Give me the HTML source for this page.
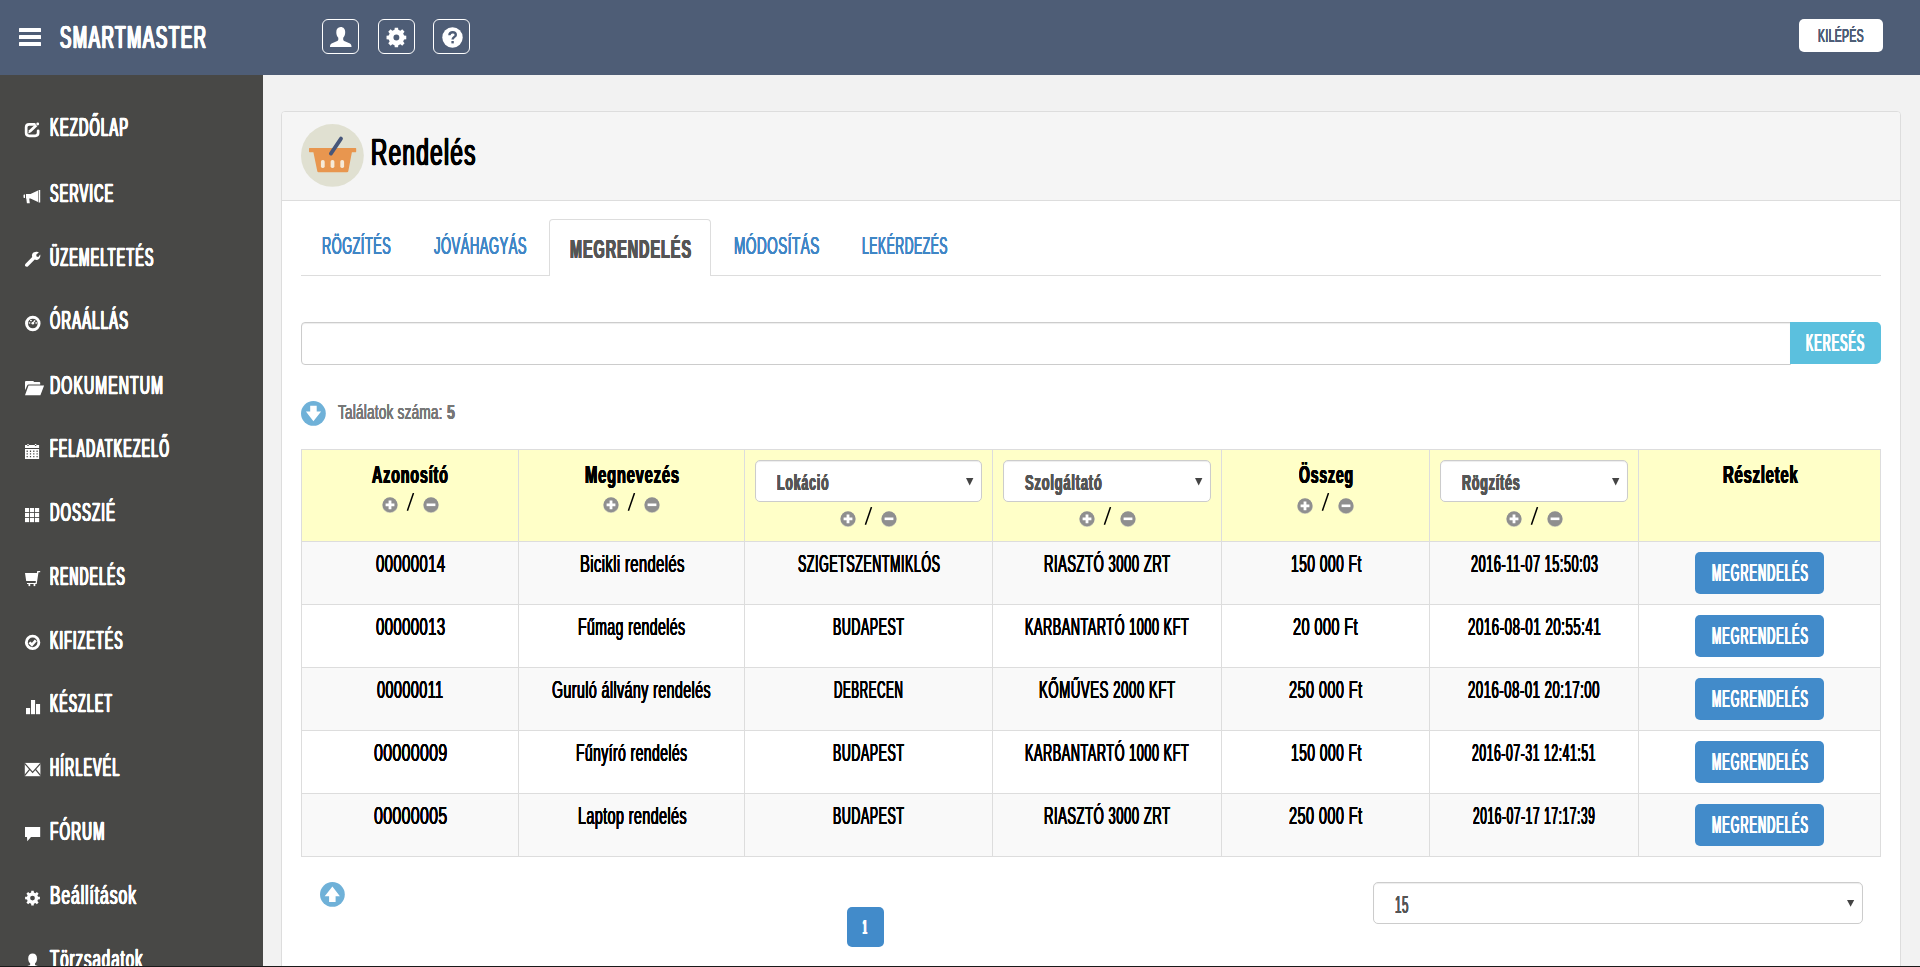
<!DOCTYPE html>
<html lang="hu"><head><meta charset="utf-8"><title>SmartMaster - Rendelés</title>
<style>
html,body{margin:0;padding:0}
body{width:1920px;height:967px;overflow:hidden;position:relative;background:#f2f2f2;font-family:"Liberation Sans",sans-serif}
.a{position:absolute;display:block}
.t{position:absolute;display:block;white-space:nowrap;line-height:1;transform-origin:0 0}
</style></head><body>
<div class="a" style="left:0px;top:0px;width:1920px;height:967px;background:#f2f2f2"></div>
<div class="a" style="left:0px;top:75px;width:263px;height:892px;background:#484846"></div>
<div class="a" style="left:0px;top:0px;width:1920px;height:75px;background:#4e5d76"></div>
<div class="a" style="left:18.5px;top:28px;width:22.5px;height:4px;background:#fff;border-radius:0.5px"></div>
<div class="a" style="left:18.5px;top:35px;width:22.5px;height:4px;background:#fff;border-radius:0.5px"></div>
<div class="a" style="left:18.5px;top:42px;width:22.5px;height:4px;background:#fff;border-radius:0.5px"></div>
<span class="t" style="left:60.20px;top:22px;font-size:31.50px;font-weight:normal;color:#fff;transform:scaleX(0.5370);text-shadow:1.55px 0 0 #fff,-1.55px 0 0 #fff,0.77px 0 0 #fff,-0.77px 0 0 #fff;letter-spacing:3.09px;-webkit-text-stroke:0.65px #fff;">SMARTMASTER</span>
<div class="a" style="left:322px;top:19px;width:37px;height:35px;box-sizing:border-box;border:1px solid #fff;border-radius:6px"></div>
<div class="a" style="left:378px;top:19px;width:37px;height:35px;box-sizing:border-box;border:1px solid #fff;border-radius:6px"></div>
<div class="a" style="left:433px;top:19px;width:37px;height:35px;box-sizing:border-box;border:1px solid #fff;border-radius:6px"></div>
<svg class="a" style="left:330px;top:26.5px" width="21.5" height="20.5" viewBox="0 0 21.5 20.5"><path fill="#fff" d="M10.7 0 C13.6 0 15.2 2.2 15.2 5.2 C15.2 7.6 14.4 9.6 13.2 10.8 L13.2 12.6 C13.2 13.4 13.8 13.9 14.8 14.3 L19.4 16.2 C20.8 16.8 21.5 18 21.5 19.4 L21.5 20.5 L0 20.5 L0 19.4 C0 18 0.7 16.8 2.1 16.2 L6.7 14.3 C7.7 13.9 8.3 13.4 8.3 12.6 L8.3 10.8 C7.1 9.6 6.3 7.6 6.3 5.2 C6.3 2.2 7.8 0 10.7 0 Z"/></svg>
<svg class="a" style="left:386px;top:26.5px" width="21" height="21" viewBox="0 0 21 21"><path fill="#fff" fill-rule="evenodd" d="M18.07 8.60 L20.26 8.86 L20.26 12.14 L18.07 12.40 L17.17 14.57 L18.54 16.31 L16.21 18.64 L14.47 17.27 L12.30 18.17 L12.04 20.36 L8.76 20.36 L8.50 18.17 L6.33 17.27 L4.59 18.64 L2.26 16.31 L3.63 14.57 L2.73 12.40 L0.54 12.14 L0.54 8.86 L2.73 8.60 L3.63 6.43 L2.26 4.69 L4.59 2.36 L6.33 3.73 L8.50 2.83 L8.76 0.64 L12.04 0.64 L12.30 2.83 L14.47 3.73 L16.21 2.36 L18.54 4.69 L17.17 6.43 Z M7.45 10.50 a2.95 2.95 0 1 0 5.90 0 a2.95 2.95 0 1 0 -5.90 0 Z"/></svg>
<svg class="a" style="left:441.5px;top:26.5px" width="21" height="21" viewBox="0 0 21 21"><circle cx="10.5" cy="10.5" r="10.2" fill="#fff"/><path fill="none" stroke="#4e5d76" stroke-width="2.4" d="M7.4 8.2 C7.4 6.2 8.8 5.3 10.6 5.3 C12.5 5.3 13.8 6.3 13.8 7.9 C13.8 9.9 10.6 10 10.6 12.6"/><rect x="9.4" y="14" width="2.4" height="2.4" fill="#4e5d76"/></svg>
<div class="a" style="left:1799px;top:19px;width:84px;height:33px;background:#fff;border-radius:5px"></div>
<span class="t" style="left:1817.97px;top:26px;font-size:19.00px;font-weight:normal;color:#4e5d76;transform:scaleX(0.5508);text-shadow:0.31px 0 0 #4e5d76,-0.31px 0 0 #4e5d76,0.15px 0 0 #4e5d76,-0.15px 0 0 #4e5d76;letter-spacing:0.61px;">KILÉPÉS</span>
<span class="t" style="left:50.31px;top:115px;font-size:25.25px;font-weight:normal;color:#fff;transform:scaleX(0.5158);text-shadow:1.18px 0 0 #fff,-1.18px 0 0 #fff,0.59px 0 0 #fff,-0.59px 0 0 #fff;letter-spacing:2.35px;-webkit-text-stroke:0.38px #fff;">KEZDŐLAP</span>
<svg class="a" style="left:23px;top:120px" width="22" height="20" viewBox="0 0 22 20"><path fill="none" stroke="#fff" stroke-width="2.7" stroke-linecap="round" stroke-linejoin="round" d="M11.4 4.35 H6.15 Q3.15 4.35 3.15 7.35 V12.85 Q3.15 15.85 6.15 15.85 H12.15 Q15.15 15.85 15.15 12.85 V10.8"/><path fill="#fff" d="M5.2 13.4 L6 10.2 L12.4 4.2 L14.3 6.2 L8 12.3 Z"/><circle cx="14.7" cy="4" r="1.45" fill="#fff"/></svg>
<span class="t" style="left:50.32px;top:181px;font-size:25.25px;font-weight:normal;color:#fff;transform:scaleX(0.5044);text-shadow:1.23px 0 0 #fff,-1.23px 0 0 #fff,0.62px 0 0 #fff,-0.62px 0 0 #fff;letter-spacing:2.47px;-webkit-text-stroke:0.38px #fff;">SERVICE</span>
<svg class="a" style="left:23px;top:186px" width="22" height="20" viewBox="0 0 22 20"><path fill="#fff" d="M0.5 9.3 Q0.5 8.5 1.3 8.5 H2 V12 H1.3 Q0.5 12 0.5 11.2 Z M3 8 H7.5 L15 4.5 V16 L7.5 12.5 H6.2 L6.8 17.2 H3.9 L3.3 12.5 H3 Z M15.6 4 H17.2 V16.5 H15.6 Z"/></svg>
<span class="t" style="left:50.33px;top:245px;font-size:25.25px;font-weight:normal;color:#fff;transform:scaleX(0.4988);text-shadow:1.26px 0 0 #fff,-1.26px 0 0 #fff,0.63px 0 0 #fff,-0.63px 0 0 #fff;letter-spacing:2.53px;-webkit-text-stroke:0.38px #fff;">ÜZEMELTETÉS</span>
<svg class="a" style="left:23px;top:250px" width="22" height="20" viewBox="0 0 22 20"><path fill="#fff" transform="translate(1.8 1.5) scale(0.965)" d="M10.9 0.6 C12.2 0.1 13.6 0.3 14.6 0.9 L11.8 3.4 L12.2 5.2 L14 5.7 L15.9 3.2 C16.4 4.6 16 6.4 14.9 7.5 C13.6 8.8 11.8 9 10.3 8.4 L3.4 15.3 C2.6 16.1 1.4 16.1 0.7 15.4 C0 14.7 0 13.5 0.8 12.7 L7.7 5.8 C7.1 4.3 7.4 2.5 8.6 1.4 C9.2 0.9 10 0.7 10.9 0.6 Z"/></svg>
<span class="t" style="left:50.30px;top:308px;font-size:25.25px;font-weight:normal;color:#fff;transform:scaleX(0.5222);text-shadow:1.15px 0 0 #fff,-1.15px 0 0 #fff,0.57px 0 0 #fff,-0.57px 0 0 #fff;letter-spacing:2.29px;-webkit-text-stroke:0.38px #fff;">ÓRAÁLLÁS</span>
<svg class="a" style="left:23px;top:313px" width="22" height="20" viewBox="0 0 22 20"><circle cx="9.8" cy="10.5" r="6.3" fill="none" stroke="#fff" stroke-width="2.9"/><circle cx="9.8" cy="10.2" r="1.3" fill="#fff"/><path stroke="#fff" stroke-width="1.3" d="M9.8 10.2 L12.1 7.3"/><rect x="5.7" y="9.3" width="1.6" height="1.3" fill="#fff"/><rect x="12.4" y="9.3" width="1.6" height="1.3" fill="#fff"/><rect x="7.1" y="7" width="1.7" height="1.2" fill="#fff"/></svg>
<span class="t" style="left:50.25px;top:373px;font-size:25.25px;font-weight:normal;color:#fff;transform:scaleX(0.5609);text-shadow:0.97px 0 0 #fff,-0.97px 0 0 #fff,0.49px 0 0 #fff,-0.49px 0 0 #fff;letter-spacing:1.95px;-webkit-text-stroke:0.38px #fff;">DOKUMENTUM</span>
<svg class="a" style="left:23px;top:378px" width="22" height="20" viewBox="0 0 22 20"><path fill="#fff" transform="translate(1.8 2.5)" d="M0.2 1.4 Q0.2 0.4 1.2 0.4 L8.4 0.4 L9.4 1.5 L14.6 1.5 Q15.4 1.5 15.4 2.3 L15.4 4.1 L3.8 4.1 Q2.8 4.1 2.4 5 L0.2 9.8 Z M3.7 5.1 L19.3 5.1 L15.6 14.7 L0.2 14.7 Z"/></svg>
<span class="t" style="left:50.34px;top:436px;font-size:25.25px;font-weight:normal;color:#fff;transform:scaleX(0.4896);text-shadow:1.31px 0 0 #fff,-1.31px 0 0 #fff,0.66px 0 0 #fff,-0.66px 0 0 #fff;letter-spacing:2.63px;-webkit-text-stroke:0.38px #fff;">FELADATKEZELŐ</span>
<svg class="a" style="left:23px;top:441px" width="22" height="20" viewBox="0 0 22 20"><path fill="#fff" fill-rule="evenodd" d="M2 4 H16.1 V6.9 H2 Z M4.3 3 H5.7 V5 H4.3 Z M11.9 3 H13.3 V5 H11.9 Z M2 8 H16.1 V18.1 H2 Z M3.6 9.6 v1.3 h1.2 v-1.3 Z M6.9 9.6 v1.3 h1.2 v-1.3 Z M10.2 9.6 v1.3 h1.2 v-1.3 Z M13.5 9.6 v1.3 h1.2 v-1.3 Z M3.6 12.3 v1.3 h1.2 v-1.3 Z M6.9 12.3 v1.3 h1.2 v-1.3 Z M10.2 12.3 v1.3 h1.2 v-1.3 Z M13.5 12.3 v1.3 h1.2 v-1.3 Z M3.6 15 v1.3 h1.2 v-1.3 Z M6.9 15 v1.3 h1.2 v-1.3 Z M10.2 15 v1.3 h1.2 v-1.3 Z M13.5 15 v1.3 h1.2 v-1.3 Z"/></svg>
<span class="t" style="left:50.30px;top:500px;font-size:25.25px;font-weight:normal;color:#fff;transform:scaleX(0.5204);text-shadow:1.15px 0 0 #fff,-1.15px 0 0 #fff,0.58px 0 0 #fff,-0.58px 0 0 #fff;letter-spacing:2.31px;-webkit-text-stroke:0.38px #fff;">DOSSZIÉ</span>
<svg class="a" style="left:23px;top:505px" width="22" height="20" viewBox="0 0 22 20"><rect x="2" y="3" width="4.15" height="4.15" fill="#fff"/><rect x="7" y="3" width="4.15" height="4.15" fill="#fff"/><rect x="12" y="3" width="4.15" height="4.15" fill="#fff"/><rect x="2" y="8" width="4.15" height="4.15" fill="#fff"/><rect x="7" y="8" width="4.15" height="4.15" fill="#fff"/><rect x="12" y="8" width="4.15" height="4.15" fill="#fff"/><rect x="2" y="13" width="4.15" height="4.15" fill="#fff"/><rect x="7" y="13" width="4.15" height="4.15" fill="#fff"/><rect x="12" y="13" width="4.15" height="4.15" fill="#fff"/></svg>
<span class="t" style="left:50.35px;top:564px;font-size:25.25px;font-weight:normal;color:#fff;transform:scaleX(0.4817);text-shadow:1.36px 0 0 #fff,-1.36px 0 0 #fff,0.68px 0 0 #fff,-0.68px 0 0 #fff;letter-spacing:2.71px;-webkit-text-stroke:0.38px #fff;">RENDELÉS</span>
<svg class="a" style="left:23px;top:569px" width="22" height="20" viewBox="0 0 22 20"><path fill="#fff" d="M2 3.9 H14 L13 12 H3.2 Z M14.2 2 H17.2 V3.3 H15.5 L13.7 15.1 H4 V13.9 H12.6 Z"/><rect x="5.5" y="14.9" width="1.7" height="2.2" fill="#fff"/><rect x="10.6" y="14.9" width="1.7" height="2.2" fill="#fff"/></svg>
<span class="t" style="left:50.34px;top:628px;font-size:25.25px;font-weight:normal;color:#fff;transform:scaleX(0.4869);text-shadow:1.33px 0 0 #fff,-1.33px 0 0 #fff,0.66px 0 0 #fff,-0.66px 0 0 #fff;letter-spacing:2.65px;-webkit-text-stroke:0.38px #fff;">KIFIZETÉS</span>
<svg class="a" style="left:23px;top:633px" width="22" height="20" viewBox="0 0 22 20"><circle cx="9.6" cy="9.4" r="6.25" fill="none" stroke="#fff" stroke-width="2.9"/><path fill="none" stroke="#fff" stroke-width="2.7" d="M6.4 9.4 L8.9 11.8 L12.8 7.3"/></svg>
<span class="t" style="left:50.35px;top:691px;font-size:25.25px;font-weight:normal;color:#fff;transform:scaleX(0.4807);text-shadow:1.36px 0 0 #fff,-1.36px 0 0 #fff,0.68px 0 0 #fff,-0.68px 0 0 #fff;letter-spacing:2.72px;-webkit-text-stroke:0.38px #fff;">KÉSZLET</span>
<svg class="a" style="left:23px;top:696px" width="22" height="20" viewBox="0 0 22 20"><rect x="3" y="12" width="4.1" height="6.2" fill="#fff"/><rect x="8" y="4" width="4.1" height="14.2" fill="#fff"/><rect x="13" y="8" width="4.1" height="10.2" fill="#fff"/></svg>
<span class="t" style="left:50.33px;top:755px;font-size:25.25px;font-weight:normal;color:#fff;transform:scaleX(0.4941);text-shadow:1.29px 0 0 #fff,-1.29px 0 0 #fff,0.64px 0 0 #fff,-0.64px 0 0 #fff;letter-spacing:2.58px;-webkit-text-stroke:0.38px #fff;">HÍRLEVÉL</span>
<svg class="a" style="left:23px;top:760px" width="22" height="20" viewBox="0 0 22 20"><rect x="1.8" y="2.9" width="15.6" height="13.3" fill="#fff"/><path fill="none" stroke="#484846" stroke-width="1.25" d="M1.6 3.3 L9.6 12.4 L17.6 3.3 M1.6 15.6 L6.7 9.3 M17.6 15.6 L12.5 9.3"/></svg>
<span class="t" style="left:50.28px;top:819px;font-size:25.25px;font-weight:normal;color:#fff;transform:scaleX(0.5384);text-shadow:1.07px 0 0 #fff,-1.07px 0 0 #fff,0.54px 0 0 #fff,-0.54px 0 0 #fff;letter-spacing:2.14px;-webkit-text-stroke:0.38px #fff;">FÓRUM</span>
<svg class="a" style="left:23px;top:824px" width="22" height="20" viewBox="0 0 22 20"><path fill="#fff" d="M2 2.9 H17.2 V13.1 H8 L4.3 17.3 L4 13.1 H2 Z"/></svg>
<span class="t" style="left:50.18px;top:883px;font-size:25.25px;font-weight:normal;color:#fff;transform:scaleX(0.6208);text-shadow:0.75px 0 0 #fff,-0.75px 0 0 #fff,0.37px 0 0 #fff,-0.37px 0 0 #fff;letter-spacing:1.50px;-webkit-text-stroke:0.38px #fff;">Beállítások</span>
<svg class="a" style="left:23px;top:888px" width="22" height="20" viewBox="0 0 22 20"><path fill="#fff" fill-rule="evenodd" d="M15.03 8.73 L16.90 8.87 L16.90 11.33 L15.03 11.47 L14.38 13.04 L15.60 14.46 L13.86 16.20 L12.44 14.98 L10.87 15.63 L10.73 17.50 L8.27 17.50 L8.13 15.63 L6.56 14.98 L5.14 16.20 L3.40 14.46 L4.62 13.04 L3.97 11.47 L2.10 11.33 L2.10 8.87 L3.97 8.73 L4.62 7.16 L3.40 5.74 L5.14 4.00 L6.56 5.22 L8.13 4.57 L8.27 2.70 L10.73 2.70 L10.87 4.57 L12.44 5.22 L13.86 4.00 L15.60 5.74 L14.38 7.16 Z M7.10 10.10 a2.40 2.40 0 1 0 4.80 0 a2.40 2.40 0 1 0 -4.80 0 Z"/></svg>
<span class="t" style="left:50.22px;top:947px;font-size:25.25px;font-weight:normal;color:#fff;transform:scaleX(0.5938);text-shadow:0.84px 0 0 #fff,-0.84px 0 0 #fff,0.42px 0 0 #fff,-0.42px 0 0 #fff;letter-spacing:1.69px;-webkit-text-stroke:0.38px #fff;">Törzsadatok</span>
<svg class="a" style="left:23px;top:952px" width="22" height="20" viewBox="0 0 22 20"><path fill="#fff" d="M9.6 1.6 C12.3 1.6 14 3.6 14 6.4 C14 8.6 13.2 10.4 12 11.4 L12 12.2 C12 12.9 12.5 13.3 13.4 13.6 L17 14.8 L17 20 L2.2 20 L2.2 14.8 L5.8 13.6 C6.7 13.3 7.2 12.9 7.2 12.2 L7.2 11.4 C6 10.4 5.2 8.6 5.2 6.4 C5.2 3.6 6.9 1.6 9.6 1.6 Z"/></svg>
<div class="a" style="left:281px;top:111px;width:1620px;height:900px;box-sizing:border-box;border:1px solid #dddddd;border-radius:4px;background:#fff"></div>
<div class="a" style="left:282px;top:112px;width:1618px;height:88px;background:#f5f5f5;border-radius:3px 3px 0 0"></div>
<div class="a" style="left:282px;top:200px;width:1618px;height:1px;background:#dddddd"></div>
<svg class="a" style="left:301px;top:124px" width="63" height="63" viewBox="0 0 63 63"><circle cx="31.4" cy="31.4" r="31.4" fill="#e0e0d1"/><path fill="#e8964f" d="M8.6 23.9 L54.6 23.9 Q55.2 23.9 55.2 24.5 L55.2 27.6 Q55.2 28.2 54.6 28.2 L50.9 28.2 L47.3 47.2 Q47.1 48.3 46 48.3 L17.6 48.3 Q16.5 48.3 16.3 47.2 L12.4 28.2 L8.6 28.2 Q8 28.2 8 27.6 L8 24.5 Q8 23.9 8.6 23.9 Z"/><rect x="19.9" y="36" width="3.8" height="8" rx="1.7" fill="#f6ead8"/><rect x="29.6" y="36" width="3.8" height="8" rx="1.7" fill="#f6ead8"/><rect x="39.3" y="36" width="3.8" height="8" rx="1.7" fill="#f6ead8"/><path stroke="#46567a" stroke-width="3.8" stroke-linecap="round" d="M40 14.6 L29.9 29.6"/></svg>
<span class="t" style="left:371.24px;top:135px;font-size:36.25px;font-weight:normal;color:#000;transform:scaleX(0.6206);text-shadow:1.08px 0 0 #000,-1.08px 0 0 #000,0.54px 0 0 #000,-0.54px 0 0 #000;letter-spacing:2.16px;-webkit-text-stroke:0.55px #000;">Rendelés</span>
<div class="a" style="left:301px;top:275px;width:1580px;height:1px;background:#dddddd"></div>
<div class="a" style="left:549px;top:219px;width:162px;height:57px;box-sizing:border-box;border:1px solid #dddddd;border-bottom:none;border-radius:4px 4px 0 0;background:#fff"></div>
<span class="t" style="left:321.54px;top:234px;font-size:24.25px;font-weight:normal;color:#3f86c6;transform:scaleX(0.5269);text-shadow:0.46px 0 0 #3f86c6,-0.46px 0 0 #3f86c6,0.23px 0 0 #3f86c6,-0.23px 0 0 #3f86c6;letter-spacing:0.92px;">RÖGZÍTÉS</span>
<span class="t" style="left:433.53px;top:234px;font-size:24.25px;font-weight:normal;color:#3f86c6;transform:scaleX(0.5376);text-shadow:0.43px 0 0 #3f86c6,-0.43px 0 0 #3f86c6,0.21px 0 0 #3f86c6,-0.21px 0 0 #3f86c6;letter-spacing:0.86px;">JÓVÁHAGYÁS</span>
<span class="t" style="left:569.81px;top:236px;font-size:26.25px;font-weight:bold;color:#555;transform:scaleX(0.5468);text-shadow:0.93px 0 0 #555,-0.93px 0 0 #555,0.46px 0 0 #555,-0.46px 0 0 #555;letter-spacing:1.86px;">MEGRENDELÉS</span>
<span class="t" style="left:733.50px;top:234px;font-size:24.25px;font-weight:normal;color:#3f86c6;transform:scaleX(0.5642);text-shadow:0.36px 0 0 #3f86c6,-0.36px 0 0 #3f86c6,0.18px 0 0 #3f86c6,-0.18px 0 0 #3f86c6;letter-spacing:0.71px;">MÓDOSÍTÁS</span>
<span class="t" style="left:861.77px;top:234px;font-size:24.25px;font-weight:normal;color:#3f86c6;transform:scaleX(0.5027);text-shadow:0.54px 0 0 #3f86c6,-0.54px 0 0 #3f86c6,0.27px 0 0 #3f86c6,-0.27px 0 0 #3f86c6;letter-spacing:1.07px;">LEKÉRDEZÉS</span>
<div class="a" style="left:301px;top:322px;width:1490px;height:43px;box-sizing:border-box;border:1px solid #ccc;border-radius:4px 0 0 4px;background:#fff;box-shadow:inset 0 1px 1px rgba(0,0,0,.075)"></div>
<div class="a" style="left:1790px;top:322px;width:91px;height:42px;background:#5bc0de;border-radius:0 5px 5px 0"></div>
<span class="t" style="left:1806.25px;top:331px;font-size:24.75px;font-weight:normal;color:#fff;transform:scaleX(0.4334);text-shadow:1.42px 0 0 #fff,-1.42px 0 0 #fff,0.71px 0 0 #fff,-0.71px 0 0 #fff;letter-spacing:2.85px;-webkit-text-stroke:0.17px #fff;">KERESÉS</span>
<svg class="a" style="left:301px;top:401.2px" width="25" height="25" viewBox="0 0 25 25"><circle cx="12.4" cy="12.4" r="12.4" fill="#6fb1d8"/><path fill="#fff" d="M9.2 4.8 L15.7 4.8 L15.7 10.5 L20.1 10.5 L12.4 20.2 L4.9 10.5 L9.2 10.5 Z"/></svg>
<span class="t" style="left:338.41px;top:402px;font-size:20.25px;font-weight:normal;color:#777;transform:scaleX(0.6704);text-shadow:0.17px 0 0 #777,-0.17px 0 0 #777,0.08px 0 0 #777,-0.08px 0 0 #777;letter-spacing:0.33px;">Találatok száma:</span>
<span class="t" style="left:446.97px;top:402px;font-size:20.25px;font-weight:bold;color:#777;transform:scaleX(0.6997);text-shadow:0.24px 0 0 #777,-0.24px 0 0 #777,0.12px 0 0 #777,-0.12px 0 0 #777;letter-spacing:0.48px;">5</span>
<div class="a" style="left:301px;top:449px;width:1580px;height:408px;background:#dddddd"></div>
<div class="a" style="left:302px;top:450px;width:216px;height:91px;background:#ffffc8"></div>
<div class="a" style="left:519px;top:450px;width:225px;height:91px;background:#ffffc8"></div>
<div class="a" style="left:745px;top:450px;width:247px;height:91px;background:#ffffc8"></div>
<div class="a" style="left:993px;top:450px;width:228px;height:91px;background:#ffffc8"></div>
<div class="a" style="left:1222px;top:450px;width:207px;height:91px;background:#ffffc8"></div>
<div class="a" style="left:1430px;top:450px;width:208px;height:91px;background:#ffffc8"></div>
<div class="a" style="left:1639px;top:450px;width:241px;height:91px;background:#ffffc8"></div>
<div class="a" style="left:302px;top:542px;width:216px;height:62px;background:#f9f9f9"></div>
<div class="a" style="left:519px;top:542px;width:225px;height:62px;background:#f9f9f9"></div>
<div class="a" style="left:745px;top:542px;width:247px;height:62px;background:#f9f9f9"></div>
<div class="a" style="left:993px;top:542px;width:228px;height:62px;background:#f9f9f9"></div>
<div class="a" style="left:1222px;top:542px;width:207px;height:62px;background:#f9f9f9"></div>
<div class="a" style="left:1430px;top:542px;width:208px;height:62px;background:#f9f9f9"></div>
<div class="a" style="left:1639px;top:542px;width:241px;height:62px;background:#f9f9f9"></div>
<div class="a" style="left:302px;top:605px;width:216px;height:62px;background:#fff"></div>
<div class="a" style="left:519px;top:605px;width:225px;height:62px;background:#fff"></div>
<div class="a" style="left:745px;top:605px;width:247px;height:62px;background:#fff"></div>
<div class="a" style="left:993px;top:605px;width:228px;height:62px;background:#fff"></div>
<div class="a" style="left:1222px;top:605px;width:207px;height:62px;background:#fff"></div>
<div class="a" style="left:1430px;top:605px;width:208px;height:62px;background:#fff"></div>
<div class="a" style="left:1639px;top:605px;width:241px;height:62px;background:#fff"></div>
<div class="a" style="left:302px;top:668px;width:216px;height:62px;background:#f9f9f9"></div>
<div class="a" style="left:519px;top:668px;width:225px;height:62px;background:#f9f9f9"></div>
<div class="a" style="left:745px;top:668px;width:247px;height:62px;background:#f9f9f9"></div>
<div class="a" style="left:993px;top:668px;width:228px;height:62px;background:#f9f9f9"></div>
<div class="a" style="left:1222px;top:668px;width:207px;height:62px;background:#f9f9f9"></div>
<div class="a" style="left:1430px;top:668px;width:208px;height:62px;background:#f9f9f9"></div>
<div class="a" style="left:1639px;top:668px;width:241px;height:62px;background:#f9f9f9"></div>
<div class="a" style="left:302px;top:731px;width:216px;height:62px;background:#fff"></div>
<div class="a" style="left:519px;top:731px;width:225px;height:62px;background:#fff"></div>
<div class="a" style="left:745px;top:731px;width:247px;height:62px;background:#fff"></div>
<div class="a" style="left:993px;top:731px;width:228px;height:62px;background:#fff"></div>
<div class="a" style="left:1222px;top:731px;width:207px;height:62px;background:#fff"></div>
<div class="a" style="left:1430px;top:731px;width:208px;height:62px;background:#fff"></div>
<div class="a" style="left:1639px;top:731px;width:241px;height:62px;background:#fff"></div>
<div class="a" style="left:302px;top:794px;width:216px;height:62px;background:#f9f9f9"></div>
<div class="a" style="left:519px;top:794px;width:225px;height:62px;background:#f9f9f9"></div>
<div class="a" style="left:745px;top:794px;width:247px;height:62px;background:#f9f9f9"></div>
<div class="a" style="left:993px;top:794px;width:228px;height:62px;background:#f9f9f9"></div>
<div class="a" style="left:1222px;top:794px;width:207px;height:62px;background:#f9f9f9"></div>
<div class="a" style="left:1430px;top:794px;width:208px;height:62px;background:#f9f9f9"></div>
<div class="a" style="left:1639px;top:794px;width:241px;height:62px;background:#f9f9f9"></div>
<span class="t" style="left:372.23px;top:463px;font-size:24.75px;font-weight:bold;color:#000;transform:scaleX(0.5771);text-shadow:0.74px 0 0 #000,-0.74px 0 0 #000,0.37px 0 0 #000,-0.37px 0 0 #000;letter-spacing:1.48px;">Azonosító</span>
<span class="t" style="left:584.89px;top:463px;font-size:24.75px;font-weight:bold;color:#000;transform:scaleX(0.5963);text-shadow:0.66px 0 0 #000,-0.66px 0 0 #000,0.33px 0 0 #000,-0.33px 0 0 #000;letter-spacing:1.32px;">Megnevezés</span>
<span class="t" style="left:1298.75px;top:463px;font-size:24.75px;font-weight:bold;color:#000;transform:scaleX(0.5631);text-shadow:0.80px 0 0 #000,-0.80px 0 0 #000,0.40px 0 0 #000,-0.40px 0 0 #000;letter-spacing:1.60px;">Összeg</span>
<span class="t" style="left:1722.58px;top:463px;font-size:24.75px;font-weight:bold;color:#000;transform:scaleX(0.6004);text-shadow:0.64px 0 0 #000,-0.64px 0 0 #000,0.32px 0 0 #000,-0.32px 0 0 #000;letter-spacing:1.28px;">Részletek</span>
<svg class="a" style="left:381.5px;top:497.2px" width="16" height="17" viewBox="0 0 16 17"><circle cx="8" cy="8.4" r="7.7" fill="#cfcfb8"/><circle cx="8" cy="7.8" r="7.5" fill="#8f8f8f"/><path stroke="#fff" stroke-width="2.8" d="M3.6 7.8 H12.4 M8 3.4 V12.2"/></svg>
<svg class="a" style="left:422.5px;top:497.2px" width="16" height="17" viewBox="0 0 16 17"><circle cx="8" cy="8.4" r="7.7" fill="#cfcfb8"/><circle cx="8" cy="7.8" r="7.5" fill="#8f8f8f"/><path stroke="#fff" stroke-width="2.6" d="M3.6 7.8 H12.4"/></svg>
<svg class="a" style="left:404.9px;top:493px" width="10" height="19" viewBox="0 0 10 19"><path stroke="#000" stroke-width="1.5" d="M8.5 0 L2.4 17.7"/></svg>
<svg class="a" style="left:603px;top:497.2px" width="16" height="17" viewBox="0 0 16 17"><circle cx="8" cy="8.4" r="7.7" fill="#cfcfb8"/><circle cx="8" cy="7.8" r="7.5" fill="#8f8f8f"/><path stroke="#fff" stroke-width="2.8" d="M3.6 7.8 H12.4 M8 3.4 V12.2"/></svg>
<svg class="a" style="left:644px;top:497.2px" width="16" height="17" viewBox="0 0 16 17"><circle cx="8" cy="8.4" r="7.7" fill="#cfcfb8"/><circle cx="8" cy="7.8" r="7.5" fill="#8f8f8f"/><path stroke="#fff" stroke-width="2.6" d="M3.6 7.8 H12.4"/></svg>
<svg class="a" style="left:626.4px;top:493px" width="10" height="19" viewBox="0 0 10 19"><path stroke="#000" stroke-width="1.5" d="M8.5 0 L2.4 17.7"/></svg>
<svg class="a" style="left:1297px;top:497.5px" width="16" height="17" viewBox="0 0 16 17"><circle cx="8" cy="8.4" r="7.7" fill="#cfcfb8"/><circle cx="8" cy="7.8" r="7.5" fill="#8f8f8f"/><path stroke="#fff" stroke-width="2.8" d="M3.6 7.8 H12.4 M8 3.4 V12.2"/></svg>
<svg class="a" style="left:1338px;top:497.5px" width="16" height="17" viewBox="0 0 16 17"><circle cx="8" cy="8.4" r="7.7" fill="#cfcfb8"/><circle cx="8" cy="7.8" r="7.5" fill="#8f8f8f"/><path stroke="#fff" stroke-width="2.6" d="M3.6 7.8 H12.4"/></svg>
<svg class="a" style="left:1320.4px;top:493.3px" width="10" height="19" viewBox="0 0 10 19"><path stroke="#000" stroke-width="1.5" d="M8.5 0 L2.4 17.7"/></svg>
<svg class="a" style="left:840px;top:511.4px" width="16" height="17" viewBox="0 0 16 17"><circle cx="8" cy="8.4" r="7.7" fill="#cfcfb8"/><circle cx="8" cy="7.8" r="7.5" fill="#8f8f8f"/><path stroke="#fff" stroke-width="2.8" d="M3.6 7.8 H12.4 M8 3.4 V12.2"/></svg>
<svg class="a" style="left:881px;top:511.4px" width="16" height="17" viewBox="0 0 16 17"><circle cx="8" cy="8.4" r="7.7" fill="#cfcfb8"/><circle cx="8" cy="7.8" r="7.5" fill="#8f8f8f"/><path stroke="#fff" stroke-width="2.6" d="M3.6 7.8 H12.4"/></svg>
<svg class="a" style="left:863.4px;top:507.2px" width="10" height="19" viewBox="0 0 10 19"><path stroke="#000" stroke-width="1.5" d="M8.5 0 L2.4 17.7"/></svg>
<svg class="a" style="left:1078.5px;top:511.4px" width="16" height="17" viewBox="0 0 16 17"><circle cx="8" cy="8.4" r="7.7" fill="#cfcfb8"/><circle cx="8" cy="7.8" r="7.5" fill="#8f8f8f"/><path stroke="#fff" stroke-width="2.8" d="M3.6 7.8 H12.4 M8 3.4 V12.2"/></svg>
<svg class="a" style="left:1119.5px;top:511.4px" width="16" height="17" viewBox="0 0 16 17"><circle cx="8" cy="8.4" r="7.7" fill="#cfcfb8"/><circle cx="8" cy="7.8" r="7.5" fill="#8f8f8f"/><path stroke="#fff" stroke-width="2.6" d="M3.6 7.8 H12.4"/></svg>
<svg class="a" style="left:1101.9px;top:507.2px" width="10" height="19" viewBox="0 0 10 19"><path stroke="#000" stroke-width="1.5" d="M8.5 0 L2.4 17.7"/></svg>
<svg class="a" style="left:1505.5px;top:511.4px" width="16" height="17" viewBox="0 0 16 17"><circle cx="8" cy="8.4" r="7.7" fill="#cfcfb8"/><circle cx="8" cy="7.8" r="7.5" fill="#8f8f8f"/><path stroke="#fff" stroke-width="2.8" d="M3.6 7.8 H12.4 M8 3.4 V12.2"/></svg>
<svg class="a" style="left:1546.5px;top:511.4px" width="16" height="17" viewBox="0 0 16 17"><circle cx="8" cy="8.4" r="7.7" fill="#cfcfb8"/><circle cx="8" cy="7.8" r="7.5" fill="#8f8f8f"/><path stroke="#fff" stroke-width="2.6" d="M3.6 7.8 H12.4"/></svg>
<svg class="a" style="left:1528.9px;top:507.2px" width="10" height="19" viewBox="0 0 10 19"><path stroke="#000" stroke-width="1.5" d="M8.5 0 L2.4 17.7"/></svg>
<div class="a" style="left:755px;top:460px;width:227px;height:42px;box-sizing:border-box;border:1px solid #ccc;border-radius:5px;background:#fff;box-shadow:inset 0 1px 1px rgba(0,0,0,.075)"></div>
<span class="t" style="left:776.92px;top:472px;font-size:22.25px;font-weight:bold;color:#555;transform:scaleX(0.5539);text-shadow:0.76px 0 0 #555,-0.76px 0 0 #555,0.38px 0 0 #555,-0.38px 0 0 #555;letter-spacing:1.52px;">Lokáció</span>
<svg class="a" style="left:965.8px;top:477.5px" width="8" height="8" viewBox="0 0 8 8"><path fill="#444" d="M0 0 H7.4 L3.7 7.4 Z"/></svg>
<div class="a" style="left:1003px;top:460px;width:208px;height:42px;box-sizing:border-box;border:1px solid #ccc;border-radius:5px;background:#fff;box-shadow:inset 0 1px 1px rgba(0,0,0,.075)"></div>
<span class="t" style="left:1024.67px;top:472px;font-size:22.25px;font-weight:bold;color:#555;transform:scaleX(0.5838);text-shadow:0.64px 0 0 #555,-0.64px 0 0 #555,0.32px 0 0 #555,-0.32px 0 0 #555;letter-spacing:1.28px;">Szolgáltató</span>
<svg class="a" style="left:1195px;top:477.5px" width="8" height="8" viewBox="0 0 8 8"><path fill="#444" d="M0 0 H7.4 L3.7 7.4 Z"/></svg>
<div class="a" style="left:1440px;top:460px;width:188px;height:42px;box-sizing:border-box;border:1px solid #ccc;border-radius:5px;background:#fff;box-shadow:inset 0 1px 1px rgba(0,0,0,.075)"></div>
<span class="t" style="left:1461.91px;top:472px;font-size:22.25px;font-weight:bold;color:#555;transform:scaleX(0.5596);text-shadow:0.74px 0 0 #555,-0.74px 0 0 #555,0.37px 0 0 #555,-0.37px 0 0 #555;letter-spacing:1.48px;">Rögzítés</span>
<svg class="a" style="left:1611.8px;top:477.5px" width="8" height="8" viewBox="0 0 8 8"><path fill="#444" d="M0 0 H7.4 L3.7 7.4 Z"/></svg>
<span class="t" style="left:375.67px;top:552px;font-size:23.75px;font-weight:normal;color:#000;transform:scaleX(0.6312);text-shadow:0.28px 0 0 #000,-0.28px 0 0 #000,0.14px 0 0 #000,-0.14px 0 0 #000;letter-spacing:0.55px;">00000014</span>
<span class="t" style="left:579.68px;top:552px;font-size:23.75px;font-weight:normal;color:#000;transform:scaleX(0.6250);text-shadow:0.29px 0 0 #000,-0.29px 0 0 #000,0.14px 0 0 #000,-0.14px 0 0 #000;letter-spacing:0.58px;">Bicikli rendelés</span>
<span class="t" style="left:797.79px;top:552px;font-size:23.75px;font-weight:normal;color:#000;transform:scaleX(0.5232);text-shadow:0.56px 0 0 #000,-0.56px 0 0 #000,0.28px 0 0 #000,-0.28px 0 0 #000;letter-spacing:1.12px;">SZIGETSZENTMIKLÓS</span>
<span class="t" style="left:1044.26px;top:552px;font-size:23.75px;font-weight:normal;color:#000;transform:scaleX(0.5500);text-shadow:0.48px 0 0 #000,-0.48px 0 0 #000,0.24px 0 0 #000,-0.24px 0 0 #000;letter-spacing:0.96px;">RIASZTÓ 3000 ZRT</span>
<span class="t" style="left:1290.73px;top:552px;font-size:23.75px;font-weight:normal;color:#000;transform:scaleX(0.5834);text-shadow:0.39px 0 0 #000,-0.39px 0 0 #000,0.19px 0 0 #000,-0.19px 0 0 #000;letter-spacing:0.78px;">150 000 Ft</span>
<span class="t" style="left:1470.78px;top:552px;font-size:23.75px;font-weight:normal;color:#000;transform:scaleX(0.5340);text-shadow:0.53px 0 0 #000,-0.53px 0 0 #000,0.26px 0 0 #000,-0.26px 0 0 #000;letter-spacing:1.05px;">2016-11-07 15:50:03</span>
<div class="a" style="left:1695px;top:552.3px;width:129px;height:41.6px;background:#428bca;border-radius:5px"></div>
<span class="t" style="left:1712.20px;top:561px;font-size:23.75px;font-weight:normal;color:#fff;transform:scaleX(0.4644);text-shadow:1.21px 0 0 #fff,-1.21px 0 0 #fff,0.60px 0 0 #fff,-0.60px 0 0 #fff;letter-spacing:2.42px;-webkit-text-stroke:0.16px #fff;">MEGRENDELÉS</span>
<span class="t" style="left:375.67px;top:615px;font-size:23.75px;font-weight:normal;color:#000;transform:scaleX(0.6312);text-shadow:0.28px 0 0 #000,-0.28px 0 0 #000,0.14px 0 0 #000,-0.14px 0 0 #000;letter-spacing:0.55px;">00000013</span>
<span class="t" style="left:578.22px;top:615px;font-size:23.75px;font-weight:normal;color:#000;transform:scaleX(0.5906);text-shadow:0.37px 0 0 #000,-0.37px 0 0 #000,0.19px 0 0 #000,-0.19px 0 0 #000;letter-spacing:0.74px;">Fűmag rendelés</span>
<span class="t" style="left:833.29px;top:615px;font-size:23.75px;font-weight:normal;color:#000;transform:scaleX(0.5218);text-shadow:0.56px 0 0 #000,-0.56px 0 0 #000,0.28px 0 0 #000,-0.28px 0 0 #000;letter-spacing:1.13px;">BUDAPEST</span>
<span class="t" style="left:1025.28px;top:615px;font-size:23.75px;font-weight:normal;color:#000;transform:scaleX(0.5336);text-shadow:0.53px 0 0 #000,-0.53px 0 0 #000,0.26px 0 0 #000,-0.26px 0 0 #000;letter-spacing:1.05px;">KARBANTARTÓ 1000 KFT</span>
<span class="t" style="left:1293.19px;top:615px;font-size:23.75px;font-weight:normal;color:#000;transform:scaleX(0.6129);text-shadow:0.32px 0 0 #000,-0.32px 0 0 #000,0.16px 0 0 #000,-0.16px 0 0 #000;letter-spacing:0.63px;">20 000 Ft</span>
<span class="t" style="left:1467.75px;top:615px;font-size:23.75px;font-weight:normal;color:#000;transform:scaleX(0.5613);text-shadow:0.45px 0 0 #000,-0.45px 0 0 #000,0.22px 0 0 #000,-0.22px 0 0 #000;letter-spacing:0.89px;">2016-08-01 20:55:41</span>
<div class="a" style="left:1695px;top:615.3px;width:129px;height:41.6px;background:#428bca;border-radius:5px"></div>
<span class="t" style="left:1712.20px;top:624px;font-size:23.75px;font-weight:normal;color:#fff;transform:scaleX(0.4644);text-shadow:1.21px 0 0 #fff,-1.21px 0 0 #fff,0.60px 0 0 #fff,-0.60px 0 0 #fff;letter-spacing:2.42px;-webkit-text-stroke:0.16px #fff;">MEGRENDELÉS</span>
<span class="t" style="left:377.20px;top:678px;font-size:23.75px;font-weight:normal;color:#000;transform:scaleX(0.6095);text-shadow:0.32px 0 0 #000,-0.32px 0 0 #000,0.16px 0 0 #000,-0.16px 0 0 #000;letter-spacing:0.65px;">00000011</span>
<span class="t" style="left:552.21px;top:678px;font-size:23.75px;font-weight:normal;color:#000;transform:scaleX(0.5986);text-shadow:0.35px 0 0 #000,-0.35px 0 0 #000,0.18px 0 0 #000,-0.18px 0 0 #000;letter-spacing:0.70px;">Guruló állvány rendelés</span>
<span class="t" style="left:834.33px;top:678px;font-size:23.75px;font-weight:normal;color:#000;transform:scaleX(0.4862);text-shadow:0.68px 0 0 #000,-0.68px 0 0 #000,0.34px 0 0 #000,-0.34px 0 0 #000;letter-spacing:1.37px;">DEBRECEN</span>
<span class="t" style="left:1039.25px;top:678px;font-size:23.75px;font-weight:normal;color:#000;transform:scaleX(0.5591);text-shadow:0.45px 0 0 #000,-0.45px 0 0 #000,0.23px 0 0 #000,-0.23px 0 0 #000;letter-spacing:0.91px;">KŐMŰVES 2000 KFT</span>
<span class="t" style="left:1289.19px;top:678px;font-size:23.75px;font-weight:normal;color:#000;transform:scaleX(0.6129);text-shadow:0.32px 0 0 #000,-0.32px 0 0 #000,0.16px 0 0 #000,-0.16px 0 0 #000;letter-spacing:0.63px;">250 000 Ft</span>
<span class="t" style="left:1468.26px;top:678px;font-size:23.75px;font-weight:normal;color:#000;transform:scaleX(0.5540);text-shadow:0.47px 0 0 #000,-0.47px 0 0 #000,0.23px 0 0 #000,-0.23px 0 0 #000;letter-spacing:0.93px;">2016-08-01 20:17:00</span>
<div class="a" style="left:1695px;top:678.3px;width:129px;height:41.6px;background:#428bca;border-radius:5px"></div>
<span class="t" style="left:1712.20px;top:687px;font-size:23.75px;font-weight:normal;color:#fff;transform:scaleX(0.4644);text-shadow:1.21px 0 0 #fff,-1.21px 0 0 #fff,0.60px 0 0 #fff,-0.60px 0 0 #fff;letter-spacing:2.42px;-webkit-text-stroke:0.16px #fff;">MEGRENDELÉS</span>
<span class="t" style="left:373.62px;top:741px;font-size:23.75px;font-weight:normal;color:#000;transform:scaleX(0.6766);text-shadow:0.18px 0 0 #000,-0.18px 0 0 #000,0.09px 0 0 #000,-0.09px 0 0 #000;letter-spacing:0.37px;">00000009</span>
<span class="t" style="left:576.22px;top:741px;font-size:23.75px;font-weight:normal;color:#000;transform:scaleX(0.5852);text-shadow:0.38px 0 0 #000,-0.38px 0 0 #000,0.19px 0 0 #000,-0.19px 0 0 #000;letter-spacing:0.77px;">Fűnyíró rendelés</span>
<span class="t" style="left:833.29px;top:741px;font-size:23.75px;font-weight:normal;color:#000;transform:scaleX(0.5218);text-shadow:0.56px 0 0 #000,-0.56px 0 0 #000,0.28px 0 0 #000,-0.28px 0 0 #000;letter-spacing:1.13px;">BUDAPEST</span>
<span class="t" style="left:1025.28px;top:741px;font-size:23.75px;font-weight:normal;color:#000;transform:scaleX(0.5336);text-shadow:0.53px 0 0 #000,-0.53px 0 0 #000,0.26px 0 0 #000,-0.26px 0 0 #000;letter-spacing:1.05px;">KARBANTARTÓ 1000 KFT</span>
<span class="t" style="left:1290.73px;top:741px;font-size:23.75px;font-weight:normal;color:#000;transform:scaleX(0.5834);text-shadow:0.39px 0 0 #000,-0.39px 0 0 #000,0.19px 0 0 #000,-0.19px 0 0 #000;letter-spacing:0.78px;">150 000 Ft</span>
<span class="t" style="left:1472.31px;top:741px;font-size:23.75px;font-weight:normal;color:#000;transform:scaleX(0.5093);text-shadow:0.60px 0 0 #000,-0.60px 0 0 #000,0.30px 0 0 #000,-0.30px 0 0 #000;letter-spacing:1.21px;">2016-07-31 12:41:51</span>
<div class="a" style="left:1695px;top:741.3px;width:129px;height:41.6px;background:#428bca;border-radius:5px"></div>
<span class="t" style="left:1712.20px;top:750px;font-size:23.75px;font-weight:normal;color:#fff;transform:scaleX(0.4644);text-shadow:1.21px 0 0 #fff,-1.21px 0 0 #fff,0.60px 0 0 #fff,-0.60px 0 0 #fff;letter-spacing:2.42px;-webkit-text-stroke:0.16px #fff;">MEGRENDELÉS</span>
<span class="t" style="left:373.62px;top:804px;font-size:23.75px;font-weight:normal;color:#000;transform:scaleX(0.6766);text-shadow:0.18px 0 0 #000,-0.18px 0 0 #000,0.09px 0 0 #000,-0.09px 0 0 #000;letter-spacing:0.37px;">00000005</span>
<span class="t" style="left:577.70px;top:804px;font-size:23.75px;font-weight:normal;color:#000;transform:scaleX(0.6039);text-shadow:0.34px 0 0 #000,-0.34px 0 0 #000,0.17px 0 0 #000,-0.17px 0 0 #000;letter-spacing:0.68px;">Laptop rendelés</span>
<span class="t" style="left:833.29px;top:804px;font-size:23.75px;font-weight:normal;color:#000;transform:scaleX(0.5218);text-shadow:0.56px 0 0 #000,-0.56px 0 0 #000,0.28px 0 0 #000,-0.28px 0 0 #000;letter-spacing:1.13px;">BUDAPEST</span>
<span class="t" style="left:1044.26px;top:804px;font-size:23.75px;font-weight:normal;color:#000;transform:scaleX(0.5500);text-shadow:0.48px 0 0 #000,-0.48px 0 0 #000,0.24px 0 0 #000,-0.24px 0 0 #000;letter-spacing:0.96px;">RIASZTÓ 3000 ZRT</span>
<span class="t" style="left:1289.19px;top:804px;font-size:23.75px;font-weight:normal;color:#000;transform:scaleX(0.6129);text-shadow:0.32px 0 0 #000,-0.32px 0 0 #000,0.16px 0 0 #000,-0.16px 0 0 #000;letter-spacing:0.63px;">250 000 Ft</span>
<span class="t" style="left:1473.32px;top:804px;font-size:23.75px;font-weight:normal;color:#000;transform:scaleX(0.5009);text-shadow:0.63px 0 0 #000,-0.63px 0 0 #000,0.32px 0 0 #000,-0.32px 0 0 #000;letter-spacing:1.26px;">2016-07-17 17:17:39</span>
<div class="a" style="left:1695px;top:804.3px;width:129px;height:41.6px;background:#428bca;border-radius:5px"></div>
<span class="t" style="left:1712.20px;top:813px;font-size:23.75px;font-weight:normal;color:#fff;transform:scaleX(0.4644);text-shadow:1.21px 0 0 #fff,-1.21px 0 0 #fff,0.60px 0 0 #fff,-0.60px 0 0 #fff;letter-spacing:2.42px;-webkit-text-stroke:0.16px #fff;">MEGRENDELÉS</span>
<svg class="a" style="left:320px;top:882px" width="25" height="25" viewBox="0 0 25 25"><circle cx="12.4" cy="12.4" r="12.4" fill="#6fb1d8"/><path fill="#fff" transform="rotate(180 12.4 12.4)" d="M9.2 4.8 L15.7 4.8 L15.7 10.5 L20.1 10.5 L12.4 20.2 L4.9 10.5 L9.2 10.5 Z"/></svg>
<div class="a" style="left:847px;top:907px;width:37px;height:40px;background:#428bca;border-radius:5px"></div>
<span class="t" style="left:863.41px;top:917px;font-size:20.00px;font-weight:bold;color:#fff;transform:scaleX(0.3224);text-shadow:2.20px 0 0 #fff,-2.20px 0 0 #fff,1.10px 0 0 #fff,-1.10px 0 0 #fff;letter-spacing:4.41px;">1</span>
<div class="a" style="left:1373px;top:882px;width:490px;height:42px;box-sizing:border-box;border:1px solid #ccc;border-radius:5px;background:#fff;box-shadow:inset 0 1px 1px rgba(0,0,0,.075)"></div>
<span class="t" style="left:1395.29px;top:893px;font-size:23.75px;font-weight:normal;color:#555;transform:scaleX(0.4861);text-shadow:0.59px 0 0 #555,-0.59px 0 0 #555,0.30px 0 0 #555,-0.30px 0 0 #555;letter-spacing:1.19px;">15</span>
<svg class="a" style="left:1847px;top:900.2px" width="8" height="8" viewBox="0 0 8 8"><path fill="#444" d="M0 0 H7.2 L3.6 6.8 Z"/></svg>
<div class="a" style="left:0px;top:966px;width:1920px;height:1px;background:#1a1a1a"></div>
</body></html>
